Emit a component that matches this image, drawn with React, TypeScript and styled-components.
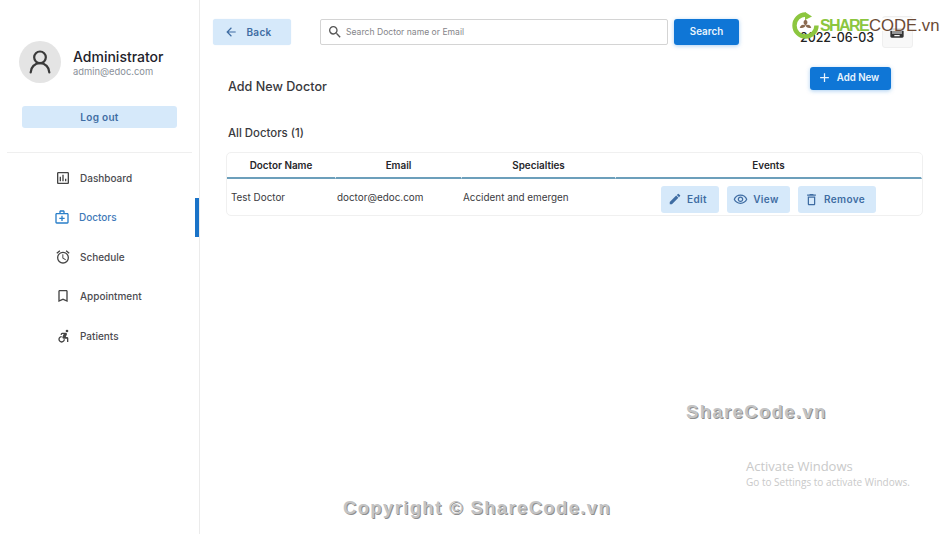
import React from "react";
import styled, { createGlobalStyle } from "styled-components";
import { UserRound } from "lucide-react";
import {
  MdArrowBack, MdSearch, MdAdd, MdEdit, MdOutlineVisibility, MdOutlineDelete, MdOutlineAssessment,
  MdOutlineMedicalServices, MdOutlineAlarm, MdBookmarkBorder, MdOutlineAccessibleForward, MdKeyboard,
} from "react-icons/md";

const Global = createGlobalStyle`
  html, body { margin: 0; padding: 0; background: #fff; }
  body { font-family: Inter, "Liberation Sans", sans-serif; color: #1f1f24; overflow: hidden; }
  * { box-sizing: border-box; }
`;
const Page = styled.div`
  position: relative; width: 950px; height: 534px; display: flex; overflow: hidden; background: #fff;
`;
const Sidebar = styled.aside`
  width: 200px; height: 534px; flex: none; border-right: 1px solid #ebebeb; padding-top: 41px; display: flex; flex-direction: column;
`;
const Profile = styled.div`
  display: flex; align-items: center; gap: 12px; padding-left: 19px; height: 42px;
`;
const Avatar = styled.div`
  width: 42px; height: 42px; border-radius: 50%; background: #e4e4e4; color: #3a3a3a; display: flex; align-items: center; justify-content: center;
`;
const ProfileText = styled.div`
  display: flex; flex-direction: column; padding-top: 2px;
`;
const Name = styled.div`
  font-size: 14px; line-height: 17px; font-weight: 500; color: #22222a;
`;
const Mail = styled.div`
  margin-top: 1px; font-size: 9.4px; line-height: 12px; color: #8a8f99;
`;
const LogoutButton = styled.button`
  margin: 23px 0 0 22px; width: 155px; height: 22px; border: none; border-radius: 3px; background: #d6e9fa; color: #3f6da3;
  font: 600 10px Inter, sans-serif; letter-spacing: 0.3px; padding: 0;
`;
const Rule = styled.hr`
  margin: 24px 7px 0; width: 185px; border: none; border-top: 1px solid #efefef; height: 0;
`;
const Menu = styled.nav`
  margin-top: 5px; display: flex; flex-direction: column;
`;
const MenuItem = styled.div<{ $active?: boolean }>`
  position: relative; height: 39.5px; display: flex; align-items: center; gap: 9px;
  padding-left: ${p => (p.$active ? "54px" : "55px")};
  font-size: 10px; font-weight: 500; color: ${p => (p.$active ? "#3e79b8" : "#4b4b50")};
  ${p => p.$active && `&::after { content: ""; position: absolute; left: 195px; top: 0; bottom: 0; width: 4px; background: #1a73c8; }`}
  svg { flex: none; color: ${p => (p.$active ? "#2a7fc9" : "#444")}; }
`;
const Main = styled.main`
  flex: 1; min-width: 0; display: flex; flex-direction: column; padding: 16px 28px 0 13px;
`;
const TopBar = styled.div`
  display: flex; align-items: center; height: 31px;
`;
const SoftButton = styled.button`
  display: inline-flex; align-items: center; justify-content: center; border: none; border-radius: 3px; background: #d6e9fa; color: #3f6da3;
  font: 600 10px Inter, sans-serif; letter-spacing: 0.3px; padding: 0 5px 0 0; gap: 5px;
`;
const BackButton = styled(SoftButton)`
  width: 78px; height: 26px; gap: 8px; padding-right: 8px; box-shadow: 0 0 1px #cfe2f3;
`;
const SearchBox = styled.div`
  margin-left: 29px; width: 348px; height: 26px; border: 1px solid #d4d4d4; border-radius: 2px; display: flex; align-items: center; gap: 3px; padding-left: 6px;
  font-size: 8.6px; color: #85858a; svg { color: #555; flex: none; }
`;
const PrimaryButton = styled.button`
  display: inline-flex; align-items: center; justify-content: center; border: none; border-radius: 3px; background: #0f76d6; color: #e9f4fd;
  font: 600 10px Inter, sans-serif; padding: 0; box-shadow: 0 1px 4px rgba(15,118,214,.35);
`;
const SearchButton = styled(PrimaryButton)`
  margin-left: 6px; width: 65px; height: 26px; font-size: 9.8px;
`;
const DateText = styled.div`
  margin-left: 61px; font-size: 12.4px; font-weight: 500; color: #222; line-height: 16px; padding-top: 12px;
`;
const CalendarButton = styled.div`
  margin-left: 8px; width: 31px; height: 32px; border: 1px solid #efefef; border-radius: 3px; background: #f8f8f8; display: flex; align-items: flex-end; justify-content: center; color: #333; padding-bottom: 6px;
`;
const TitleRow = styled.div`
  display: flex; justify-content: space-between; padding: 0 31px 0 15px; margin-top: 20px; height: 24px;
`;
const Title = styled.div`
  font-size: 12.6px; font-weight: 500; color: #38383c; padding-top: 12px; line-height: 16px;
`;
const AddButton = styled(PrimaryButton)`
  width: 81px; height: 23px; gap: 5px; font-size: 9.7px; padding: 0 5px 2px 0;
`;
const Count = styled.div`
  margin: 35px 0 0 15px; font-size: 11.4px; font-weight: 500; color: #3a3a3e; line-height: 14px;
`;
const TableCard = styled.div`
  margin: 12px 0 0 13px; width: 697px; height: 64px; border: 1px solid #f0f0f0; border-radius: 5px; overflow: hidden;
`;
const Table = styled.table`
  border-collapse: separate; border-spacing: 0; width: 100%; table-layout: fixed;
`;
const Head = styled.th<{ $w: number }>`
  width: ${p => p.$w}px; height: 26px; padding: 0; font-size: 9.9px; font-weight: 600; color: #26262a; border-bottom: 2px solid #6c9fbb; border-right: 1px solid #fff;
`;
const Cell = styled.td`
  height: 36px; padding: 0 0 0 1px; font-size: 9.9px; color: #3a3a3e; white-space: nowrap; overflow: hidden;
  &:first-child { padding-left: 4px; }
`;
const Actions = styled.div`
  display: flex; gap: 8px; padding: 4px 0 0 44px;
`;
const ActionButton = styled(SoftButton)<{ $w: number }>`
  width: ${p => p.$w}px; height: 27px; letter-spacing: 0.4px;
`;
const Logo = styled.div`
  position: absolute; left: 792px; top: 12px; display: flex; align-items: flex-start;
`;
const LogoText = styled.div`
  margin: 6px 0 0 1px; height: 13px; width: 118px; background: rgba(255,255,255,.8);
  font: 400 16.7px/15px "Liberation Sans", sans-serif; color: #6b4a35; white-space: nowrap;
  b { font-weight: 700; font-size: 16px; color: #8cc63f; letter-spacing: -1.6px; margin-right: 1px; }
`;
const Mark = styled.div<{ $x: number; $y: number }>`
  position: absolute; left: ${p => p.$x}px; top: ${p => p.$y}px; font: 700 18.5px/1.2 "Liberation Sans", sans-serif; color: #c4c4c4; letter-spacing: 1.35px;
  text-shadow: 1px 1px 0 #8f8f8f; white-space: nowrap;
`;
const Activate = styled.div`
  position: absolute; left: 746px; top: 458px; color: #c9c9c9; font-family: "Open Sans", sans-serif; font-size: 10px; line-height: 15px;
  strong { display: block; font-size: 13px; font-weight: 400; line-height: 17px; }
`;

const menu = [
  { label: "Dashboard", Icon: MdOutlineAssessment },
  { label: "Doctors", Icon: MdOutlineMedicalServices, active: true },
  { label: "Schedule", Icon: MdOutlineAlarm },
  { label: "Appointment", Icon: MdBookmarkBorder },
  { label: "Patients", Icon: MdOutlineAccessibleForward },
];

export default function App() {
  return (
    <Page>
      <Global />
      <Sidebar>
        <Profile>
          <Avatar><UserRound size={28} strokeWidth={1.9} /></Avatar>
          <ProfileText>
            <Name>Administrator</Name>
            <Mail>admin@edoc.com</Mail>
          </ProfileText>
        </Profile>
        <LogoutButton>Log out</LogoutButton>
        <Rule />
        <Menu>
          {menu.map(({ label, Icon, active }) => (
            <MenuItem key={label} $active={active}>
              <Icon size={16} />
              {label}
            </MenuItem>
          ))}
        </Menu>
      </Sidebar>
      <Main>
        <TopBar>
          <BackButton><MdArrowBack size={14} />Back</BackButton>
          <SearchBox><MdSearch size={16} />Search Doctor name or Email</SearchBox>
          <SearchButton>Search</SearchButton>
          <DateText>2022-06-03</DateText>
          <CalendarButton><MdKeyboard size={16} /></CalendarButton>
        </TopBar>
        <TitleRow>
          <Title>Add New Doctor</Title>
          <AddButton><MdAdd size={15} />Add New</AddButton>
        </TitleRow>
        <Count>All Doctors (1)</Count>
        <TableCard>
          <Table>
            <thead>
              <tr>
                <Head $w={109}>Doctor Name</Head>
                <Head $w={126}>Email</Head>
                <Head $w={154}>Specialties</Head>
                <Head $w={306}>Events</Head>
              </tr>
            </thead>
            <tbody>
              <tr>
                <Cell>Test Doctor</Cell>
                <Cell>doctor@edoc.com</Cell>
                <Cell>Accident and emergen</Cell>
                <Cell>
                  <Actions>
                    <ActionButton $w={58}><MdEdit size={14} />Edit</ActionButton>
                    <ActionButton $w={63}><MdOutlineVisibility size={15} />View</ActionButton>
                    <ActionButton $w={78}><MdOutlineDelete size={15} />Remove</ActionButton>
                  </Actions>
                </Cell>
              </tr>
            </tbody>
          </Table>
        </TableCard>
      </Main>
      <Logo>
        <svg width="27" height="27" viewBox="0 0 27 27" aria-hidden="true">
          <path d="M13.5 2.5a11 11 0 1 0 11 11" fill="none" stroke="#8cc63f" strokeWidth="4.4" />
          <path d="M13 0l7 4.5-7 3.5z" fill="#8cc63f" />
          <path d="M13.5 7.500c2.600 1.600 2.600 4 0 6c-2.600-2-2.600-4.400 0-6z" fill="#8a6a50" />
          <path d="M13.500 13.500c2.600-1.600 4.800-.8 5.800 2.200c-3 .8-5.200-.2-5.800-2.200z" fill="#8a6a50" />
          <path d="M13.500 13.500c-2.600-1.600-4.800-.8-5.800 2.200c3 .8 5.200-.2 5.800-2.200z" fill="#8a6a50" />
        </svg>
        <LogoText><b>SHARE</b>CODE.vn</LogoText>
      </Logo>
      <Mark $x={686} $y={401}>ShareCode.vn</Mark>
      <Mark $x={343} $y={497}>Copyright © ShareCode.vn</Mark>
      <Activate><strong>Activate Windows</strong>Go to Settings to activate Windows.</Activate>
    </Page>
  );
}
